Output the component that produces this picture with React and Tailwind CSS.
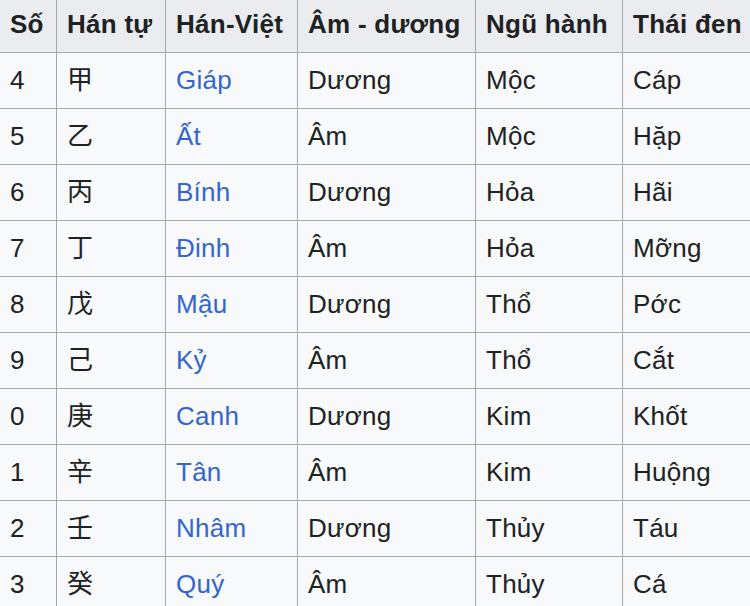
import React from "react";

const rows = [
  ["4", "甲", "Giáp", "Dương", "Mộc", "Cáp"],
  ["5", "乙", "Ất", "Âm", "Mộc", "Hặp"],
  ["6", "丙", "Bính", "Dương", "Hỏa", "Hãi"],
  ["7", "丁", "Đinh", "Âm", "Hỏa", "Mỡng"],
  ["8", "戊", "Mậu", "Dương", "Thổ", "Pớc"],
  ["9", "己", "Kỷ", "Âm", "Thổ", "Cắt"],
  ["0", "庚", "Canh", "Dương", "Kim", "Khốt"],
  ["1", "辛", "Tân", "Âm", "Kim", "Huộng"],
  ["2", "壬", "Nhâm", "Dương", "Thủy", "Táu"],
  ["3", "癸", "Quý", "Âm", "Thủy", "Cá"],
];

const heads = ["Số", "Hán tự", "Hán-Việt", "Âm - dương", "Ngũ hành", "Thái đen"];

function App() {
  return (
    <div className="w-[750px] h-[606px] overflow-hidden bg-white">
      <table
        className="table-fixed border-collapse -ml-px -mt-[5px] w-[800px] text-[26px] tracking-[0.01em] text-[#202122]"
        style={{ fontFamily: '"Liberation Sans", Arial, "Noto Sans CJK SC", sans-serif' }}
      >
        <colgroup>
          <col className="w-[57px]" />
          <col className="w-[109px]" />
          <col className="w-[132px]" />
          <col className="w-[178px]" />
          <col className="w-[147px]" />
          <col className="w-[177px]" />
        </colgroup>
        <thead>
          <tr className="h-[57px]">
            {heads.map((h) => (
              <th
                key={h}
                className="border border-[#a2a9b1] bg-[#eaecf0] px-[10px] text-left font-bold whitespace-nowrap"
              >
                {h}
              </th>
            ))}
          </tr>
        </thead>
        <tbody>
          {rows.map((r) => (
            <tr key={r[0]} className="h-[56px]">
              {r.map((c, i) => (
                <td
                  key={i}
                  className={
                    "border border-[#a2a9b1] bg-[#f8f9fa] px-[10px] whitespace-nowrap " +
                    (i === 2 ? "text-[#3366cc]" : "")
                  }
                >
                  {c}
                </td>
              ))}
            </tr>
          ))}
        </tbody>
      </table>
    </div>
  );
}

export default App;
